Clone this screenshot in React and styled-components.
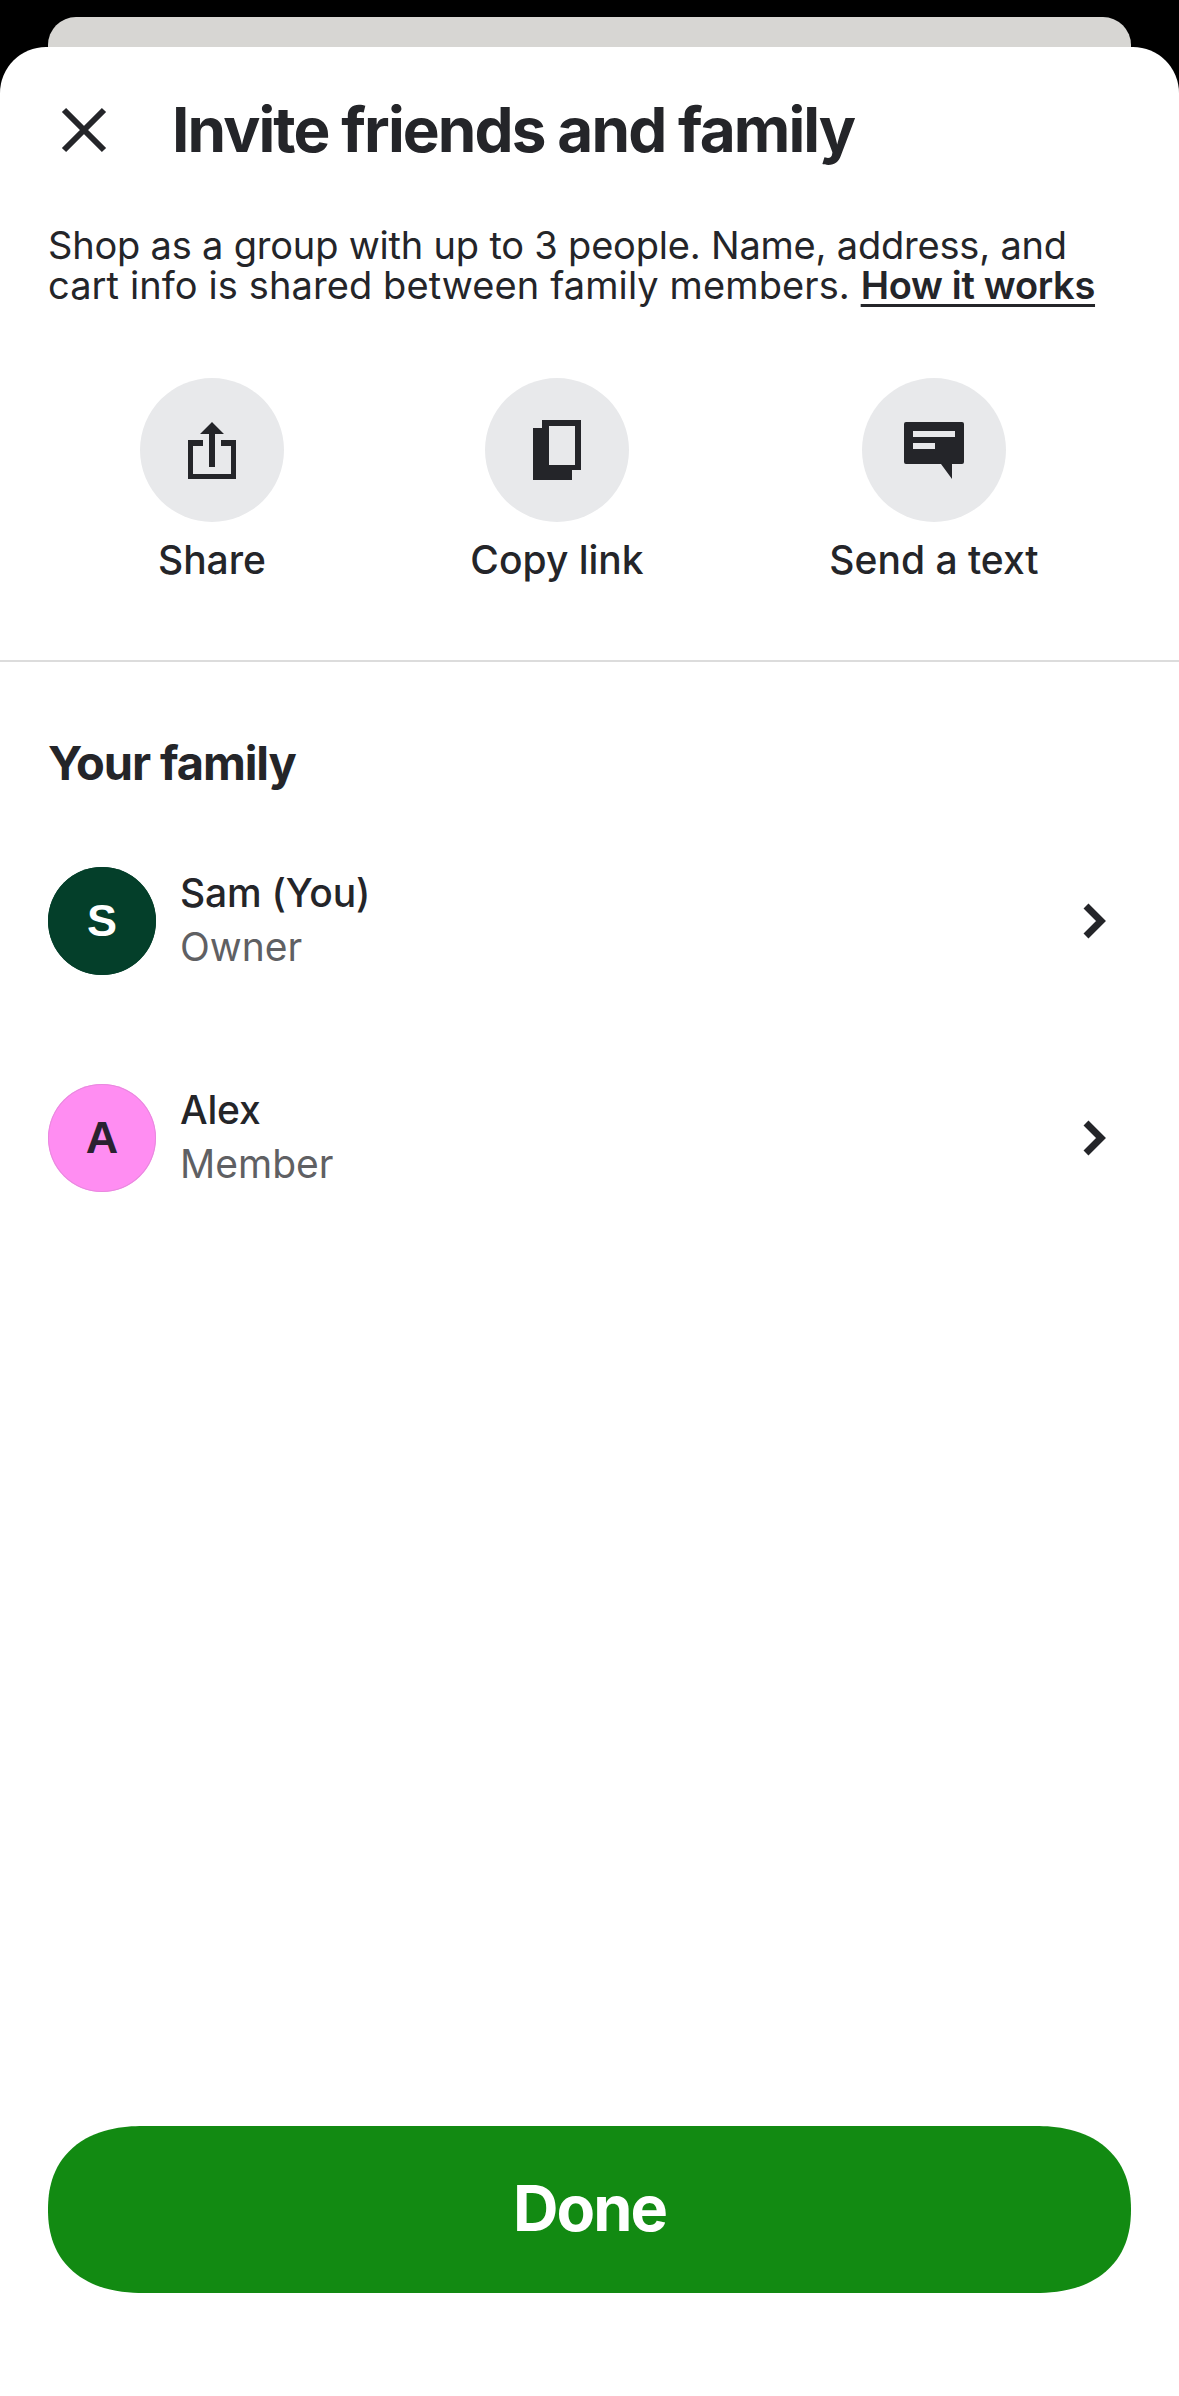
import React from 'react'
import styled, { createGlobalStyle } from 'styled-components'

const GlobalStyle = createGlobalStyle`
  html, body { margin: 0; padding: 0; background: #000; }
  * { box-sizing: border-box; }
  body { font-family: Inter, "Liberation Sans", sans-serif; color: #242529; }
`

const Screen = styled.div`
  width: 1179px;
  height: 2396px;
  padding-top: 17px;
  display: flex;
  flex-direction: column;
  background: #000;
  overflow: hidden;
`

const BackSheet = styled.div`
  flex: none;
  height: 30px;
  margin: 0 48px;
  background: #d7d6d3;
  border-radius: 28px 28px 0 0;
`

const Sheet = styled.div`
  flex: 1;
  display: flex;
  flex-direction: column;
  background: #fff;
  border-radius: 46px 46px 0 0;
`

const Header = styled.div`
  display: flex;
  align-items: center;
  height: 166px;
  padding-left: 60px;
  gap: 64px;
`

const CloseButton = styled.button`
  width: 48px;
  height: 48px;
  padding: 0;
  border: 0;
  background: none;
  display: flex;
  color: #242529;
`

const Title = styled.h1`
  margin: 0;
  font-size: 62px;
  font-weight: 700;
  letter-spacing: -1.9px;
  line-height: 68px;
  white-space: nowrap;
`

const Intro = styled.div`
  margin: 12px 0 0;
  padding: 0 48px;
  font-size: 38px;
  line-height: 40px;
  font-weight: 400;
`

const IntroLine = styled.div`
  letter-spacing: ${p => p.$spacing}px;
  white-space: nowrap;
`

const HowLink = styled.a`
  font-weight: 600;
  letter-spacing: -0.3px;
  text-decoration: underline;
  text-underline-offset: 5px;
  text-decoration-thickness: 3px;
  color: inherit;
`

const Actions = styled.div`
  display: grid;
  grid-template-columns: 424px 266px 488px;
  margin-top: 73px;
  height: 205px;
`

const Action = styled.div`
  display: flex;
  flex-direction: column;
  align-items: center;
  gap: 16px;
`

const IconCircle = styled.div`
  width: 144px;
  height: 144px;
  border-radius: 50%;
  background: #e8e9eb;
  display: flex;
  align-items: center;
  justify-content: center;
  color: #242529;
`

const ActionLabel = styled.span`
  font-size: 39px;
  font-weight: 500;
  line-height: 44px;
  white-space: nowrap;
`

const Divider = styled.hr`
  margin: 77px 0 0;
  border: 0;
  height: 2px;
  background: #dcdcdc;
`

const SectionTitle = styled.h2`
  margin: 73px 0 0;
  padding: 0 48px;
  font-size: 47px;
  font-weight: 700;
  line-height: 56px;
  letter-spacing: -1.1px;
`

const MemberList = styled.div`
  display: flex;
  flex-direction: column;
  gap: 109px;
  margin-top: 76px;
  padding: 0 48px;
`

const MemberRow = styled.div`
  display: flex;
  align-items: center;
  height: 108px;
`

const Avatar = styled.div`
  width: 108px;
  height: 108px;
  flex: none;
  border-radius: 50%;
  display: flex;
  align-items: center;
  justify-content: center;
  font-size: 45px;
  font-weight: 700;
  font-family: "Liberation Sans", Arial, sans-serif;
  background: ${p => p.$bg};
  color: ${p => p.$fg};
  box-shadow: inset 0 0 0 1px ${p => p.$ring};
`

const MemberText = styled.div`
  flex: 1;
  margin-left: 24px;
  padding-bottom: 3px;
  display: flex;
  flex-direction: column;
`

const MemberName = styled.div`
  font-size: 39px;
  font-weight: 500;
  line-height: 54px;
  letter-spacing: -0.2px;
`

const MemberRole = styled.div`
  font-size: 39px;
  font-weight: 400;
  line-height: 54px;
  color: #5f6063;
`

const Chevron = styled.svg`
  width: 24px;
  height: 36px;
  margin-right: 25px;
  flex: none;
`

const Footer = styled.div`
  margin-top: auto;
  padding: 0 48px 103px;
`

const DoneButton = styled.button`
  width: 100%;
  height: 167px;
  padding: 0 0 3px;
  border: 0;
  border-radius: 96px / 84px;
  corner-shape: superellipse(1.2);
  background: #128a12;
  color: #fff;
  font-family: inherit;
  font-size: 63px;
  font-weight: 700;
  letter-spacing: -2px;
`

const ShareIcon = () => (
  <svg width="48" height="57" viewBox="0 0 48 57" fill="currentColor">
    <path d="M24 0 L36 12 H27 V45 H21 V12 H12 Z" />
    <path d="M0 18 H15 V24 H5 V52 H43 V24 H33 V18 H48 V57 H0 Z" />
  </svg>
)

const CopyIcon = () => (
  <svg width="48" height="60" viewBox="0 0 48 60" fill="currentColor">
    <path fillRule="evenodd" d="M9 0 H48 V50 H39 V60 H0 V8 H9 Z M16 6 V45 H42 V6 Z" />
  </svg>
)

const TextIcon = () => (
  <svg width="60" height="57" viewBox="0 0 60 57" fill="currentColor">
    <path
      fillRule="evenodd"
      d="M2 0 H58 A2 2 0 0 1 60 2 V40 A2 2 0 0 1 58 42 H48 V57 L37 42 H2 A2 2 0 0 1 0 40 V2 A2 2 0 0 1 2 0 Z M9 9 V15 H51 V9 Z M9 21 V27 H31 V21 Z"
    />
  </svg>
)

const CloseIcon = () => (
  <svg width="48" height="48" viewBox="0 0 48 48" fill="none" stroke="currentColor" strokeWidth="6">
    <path d="M4 4 L44 44 M44 4 L4 44" />
  </svg>
)

const ChevronIcon = () => (
  <Chevron viewBox="0 0 24 36" fill="none" stroke="#242529" strokeWidth="7">
    <path d="M4 3 L19 18 L4 33" />
  </Chevron>
)

const members = [
  { initial: 'S', name: 'Sam (You)', role: 'Owner', bg: '#043f2a', fg: '#fff', ring: '#043f2a' },
  { initial: 'A', name: 'Alex', role: 'Member', bg: '#ff8df2', fg: '#2a2230', ring: '#e88ade' },
]

const App = () => {
  return (
    <Screen>
      <GlobalStyle />
      <BackSheet />
      <Sheet>
        <Header>
          <CloseButton aria-label="Close"><CloseIcon /></CloseButton>
          <Title>Invite friends and family</Title>
        </Header>
        <Intro>
          <IntroLine $spacing={-0.2}>Shop as a group with up to 3 people. Name, address, and</IntroLine>
          <IntroLine $spacing={0.1}>
            cart info is shared between family members. <HowLink href="#how">How it works</HowLink>
          </IntroLine>
        </Intro>
        <Actions>
          <Action>
            <IconCircle><ShareIcon /></IconCircle>
            <ActionLabel>Share</ActionLabel>
          </Action>
          <Action>
            <IconCircle><CopyIcon /></IconCircle>
            <ActionLabel>Copy link</ActionLabel>
          </Action>
          <Action>
            <IconCircle><TextIcon /></IconCircle>
            <ActionLabel>Send a text</ActionLabel>
          </Action>
        </Actions>
        <Divider />
        <SectionTitle>Your family</SectionTitle>
        <MemberList>
          {members.map(m => (
            <MemberRow key={m.name}>
              <Avatar $bg={m.bg} $fg={m.fg} $ring={m.ring}>{m.initial}</Avatar>
              <MemberText>
                <MemberName>{m.name}</MemberName>
                <MemberRole>{m.role}</MemberRole>
              </MemberText>
              <ChevronIcon />
            </MemberRow>
          ))}
        </MemberList>
        <Footer>
          <DoneButton>Done</DoneButton>
        </Footer>
      </Sheet>
    </Screen>
  )
}

export default App
